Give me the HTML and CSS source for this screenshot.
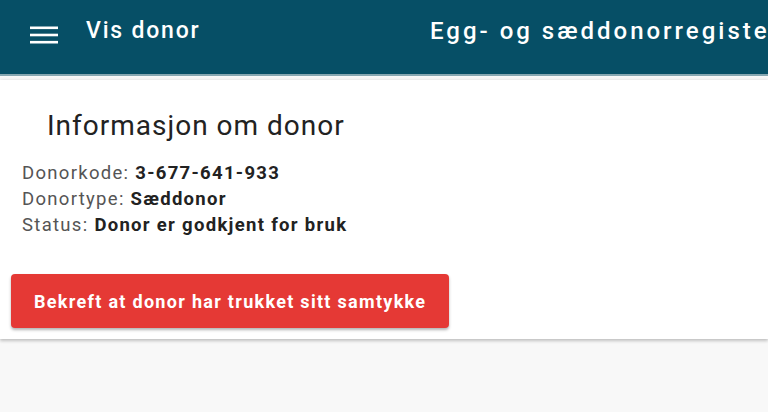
FILE: index.html
```html
<!DOCTYPE html>
<html lang="no">
<head>
<meta charset="utf-8">
<title>Vis donor</title>
<link rel="stylesheet" href="styles.css">
</head>
<body>
<header class="topbar">
  <div class="brand">
    <svg class="menu-icon" width="28" height="18" viewBox="0 0 28 18" aria-hidden="true">
      <rect x="0" y="0.5" width="28" height="2.6" fill="#ffffff"/>
      <rect x="0" y="7.7" width="28" height="2.6" fill="#ffffff"/>
      <rect x="0" y="14.9" width="28" height="2.6" fill="#ffffff"/>
    </svg>
    <span class="page-title">Vis donor</span>
  </div>
  <div class="app-title">Egg- og sæddonorregisteret</div>
</header>
<main class="page">
  <section class="card">
    <h1 class="card-title">Informasjon om donor</h1>
    <div class="info">
      <div class="info-row"><span class="label">Donorkode:</span> <strong>3-677-641-933</strong></div>
      <div class="info-row"><span class="label">Donortype:</span> <strong>Sæddonor</strong></div>
      <div class="info-row"><span class="label">Status:</span> <strong>Donor er godkjent for bruk</strong></div>
    </div>
    <button class="btn-danger" type="button">Bekreft at donor har trukket sitt samtykke</button>
  </section>
</main>
</body>
</html>
```
FILE: styles.css
```css
html, body {
  margin: 0;
  padding: 0;
}
body {
  font-family: Roboto, "Liberation Sans", Arial, sans-serif;
  background: #f8f8f8;
  color: #222;
  overflow: hidden;
  height: 412px;
}
.topbar {
  box-sizing: border-box;
  height: 76px;
  padding-top: 17px;
  background: #064f66;
  border-bottom: 2px solid #86a7b1;
  display: flex;
  align-items: flex-start;
  overflow: hidden;
  white-space: nowrap;
  color: #fff;
}
.brand {
  display: flex;
  align-items: flex-start;
  gap: 28px;
  padding-left: 30px;
  width: 400px;
  flex: none;
}
.menu-icon {
  display: block;
  margin-top: 9px;
}
.page-title {
  font-size: 23px;
  line-height: 27px;
  font-weight: 500;
  letter-spacing: 1.8px;
}
.app-title {
  font-size: 24px;
  line-height: 28px;
  font-weight: 500;
  flex: none;
  letter-spacing: 3px;
}
.page {
  padding-top: 4px;
}
.card {
  background: #fff;
  box-shadow: 0 -1px 3px rgba(0,0,0,0.06), 0 2px 3px rgba(0,0,0,0.22);
  padding: 29px 11px 11px;
}
.card-title {
  margin: 0 0 18px 36px;
  font-size: 28px;
  font-weight: 400;
  color: #222;
  line-height: 33px;
  letter-spacing: 1px;
}
.info {
  margin-left: 11px;
  margin-bottom: 36px;
  font-size: 18.5px;
  line-height: 26px;
  letter-spacing: 1.3px;
}
.label {
  color: #555;
}
.info strong {
  font-weight: 700;
  color: #222;
}
.btn-danger {
  display: inline-flex;
  align-items: center;
  height: 54px;
  padding: 0 23px;
  border: none;
  border-radius: 4px;
  background: #e53935;
  color: #fff;
  font-family: inherit;
  font-size: 18px;
  font-weight: 700;
  letter-spacing: 1.3px;
  box-shadow: 0 2px 3px rgba(0,0,0,0.3);
}
```
